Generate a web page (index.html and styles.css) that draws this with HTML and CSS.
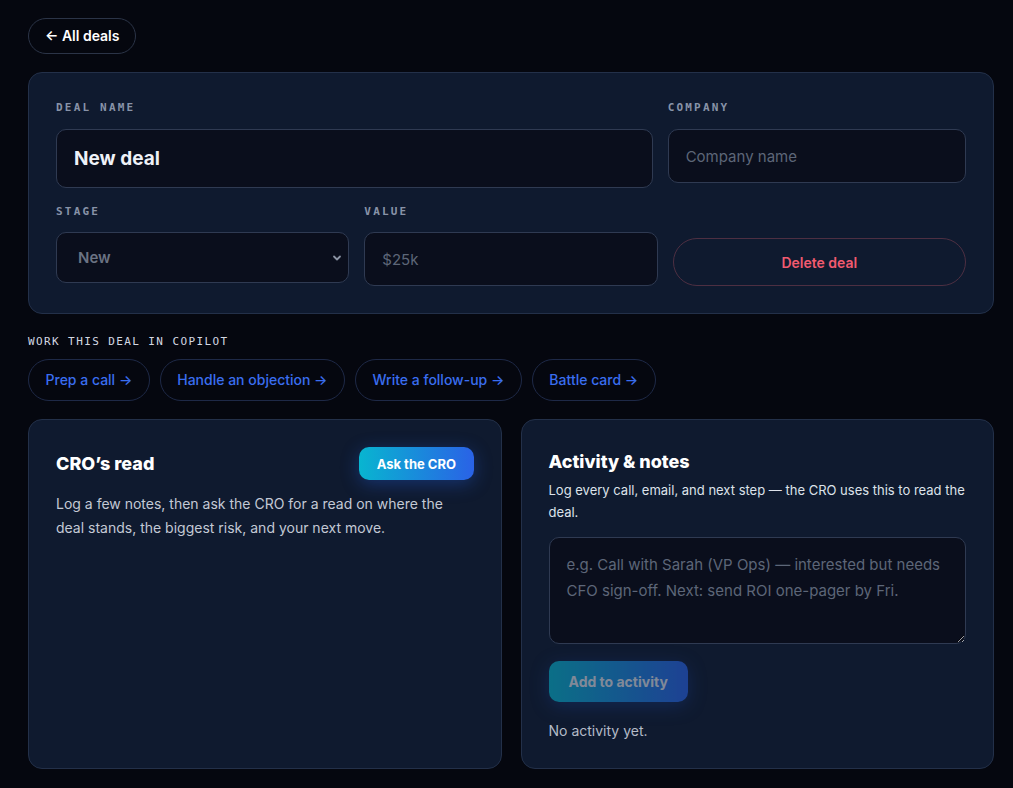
FILE: index.html
```html
<!DOCTYPE html>
<html>
<head>
  <meta charset='utf8'>
  <title>New deal</title>
  <link rel="stylesheet" href="styles.css">
</head>
<body>
  <div class='page'>
    <a class='back' href='#'>&larr; All deals</a>

    <form class='card deal'>
      <div class='row two'>
        <label class='field'>
          <span class='label'>Deal name</span>
          <input class='input big' name='name' value='New deal'>
        </label>
        <label class='field'>
          <span class='label'>Company</span>
          <input class='input' name='company' placeholder='Company name'>
        </label>
      </div>
      <div class='row three'>
        <label class='field'>
          <span class='label'>Stage</span>
          <span class='select-wrap'>
            <select class='input select' name='stage'>
              <option>New</option>
              <option>Qualified</option>
              <option>Proposal</option>
              <option>Won</option>
            </select>
            <svg class='chevron' width='12' height='12' viewBox='0 0 12 12'><path d='M3 4.5 6 7.5 9 4.5' fill='none' stroke='currentColor' stroke-width='1.8' stroke-linecap='round' stroke-linejoin='round'/></svg>
          </span>
        </label>
        <label class='field'>
          <span class='label'>Value</span>
          <input class='input' name='value' placeholder='$25k'>
        </label>
        <div class='field end'>
          <button type='button' class='danger'>Delete deal</button>
        </div>
      </div>
    </form>

    <div class='copilot'>
      <div class='label light'>Work this deal in Copilot</div>
      <div class='chips'>
        <a class='chip' href='#'>Prep a call &rarr;</a>
        <a class='chip' href='#'>Handle an objection &rarr;</a>
        <a class='chip' href='#'>Write a follow-up &rarr;</a>
        <a class='chip' href='#'>Battle card &rarr;</a>
      </div>
    </div>

    <div class='panels'>
      <section class='card panel'>
        <div class='panel-head'>
          <h2>CRO&rsquo;s read</h2>
          <button type='button' class='primary'>Ask the CRO</button>
        </div>
        <p class='copy'>Log a few notes, then ask the CRO for a read on where the deal stands, the biggest risk, and your next move.</p>
      </section>

      <section class='card panel'>
        <h2 class='solo'>Activity &amp; notes</h2>
        <p class='hint'>Log every call, email, and next step &mdash; the CRO uses this to read the deal.</p>
        <textarea class='input notes' placeholder='e.g. Call with Sarah (VP Ops) — interested but needs CFO sign-off. Next: send ROI one-pager by Fri.'></textarea>
        <button type='button' class='primary add' disabled>Add to activity</button>
        <p class='empty'>No activity yet.</p>
      </section>
    </div>
  </div>
</body>
</html>
```

FILE: styles.css
```css
html, body {
  margin: 0;
  padding: 0;
  background: #05070f;
  color: #eef1f7;
  font-family: Inter, "Liberation Sans", sans-serif;
}
.page {
  width: 966px;
  padding: 18px 0 20px 28px;
}
.back {
  display: inline-block;
  box-sizing: border-box;
  height: 36px;
  line-height: 34px;
  padding: 0 16px;
  border: 1px solid #2b3447;
  border-radius: 18px;
  color: #fff;
  font-size: 14px;
  font-weight: 600;
  text-decoration: none;
}
.card {
  box-sizing: border-box;
  background: #0f1a2f;
  border: 1px solid #233049;
  border-radius: 14px;
}
.deal {
  margin-top: 18px;
  padding: 28px 27px 27px;
}
.row {
  display: grid;
  column-gap: 15px;
}
.row.two {
  grid-template-columns: 2fr 1fr;
}
.row.three {
  grid-template-columns: 1fr 1fr 1fr;
  margin-top: 17px;
}
.row.three .label {
  margin-bottom: 13px;
}
.field {
  display: flex;
  flex-direction: column;
}
.field.end {
  justify-content: flex-end;
}
.label {
  font-family: "DejaVu Sans Mono", monospace;
  font-size: 11px;
  font-weight: bold;
  letter-spacing: 2.2px;
  text-transform: uppercase;
  color: #8893a8;
  margin-bottom: 14px;
  line-height: 14px;
}
.label.light {
  color: #d3d8e2;
  font-weight: normal;
  letter-spacing: 1.4px;
  margin-bottom: 10px;
}
.input {
  box-sizing: border-box;
  height: 54px;
  width: 100%;
  padding: 0 17px;
  background: #0a0e1c;
  border: 1px solid #2f3a52;
  border-radius: 10px;
  color: #eef1f7;
  font-family: Inter, "Liberation Sans", sans-serif;
  font-size: 15px;
  outline: none;
}
.input::placeholder {
  color: #5d6678;
}
.input.big {
  height: 59px;
  font-size: 19px;
  font-weight: 700;
}
.select-wrap {
  position: relative;
  display: block;
}
.select {
  height: 51px;
  appearance: none;
  -webkit-appearance: none;
  padding-left: 21px;
  color: #6b7383;
  font-weight: 600;
}
.chevron {
  position: absolute;
  right: 6px;
  top: 20px;
  color: #8b93a3;
}
.danger {
  box-sizing: border-box;
  height: 48px;
  width: 100%;
  background: transparent;
  border: 1px solid #4d2f42;
  border-radius: 24px;
  color: #f25a70;
  font-family: Inter, "Liberation Sans", sans-serif;
  font-size: 14px;
  font-weight: 600;
}
.copilot {
  margin-top: 21px;
}
.chips {
  display: flex;
  gap: 10px;
}
.chip {
  box-sizing: border-box;
  height: 42px;
  line-height: 40px;
  padding: 0 16.5px;
  border: 1px solid #1e2947;
  border-radius: 21px;
  color: #3a6ef0;
  font-size: 14px;
  font-weight: 500;
  text-decoration: none;
}
.panels {
  display: grid;
  grid-template-columns: 1fr 1fr;
  column-gap: 19px;
  margin-top: 18px;
}
.panel {
  min-height: 350px;
  padding: 27px 27px 28px;
}
.panel-head {
  display: flex;
  justify-content: space-between;
  align-items: center;
}
h2 {
  margin: 0;
  font-size: 18px;
  font-weight: 800;
  color: #fff;
}
h2.solo {
  margin-top: 4px;
}
.primary {
  box-sizing: border-box;
  height: 33px;
  padding: 0 17.5px;
  border: 0;
  border-radius: 10px;
  background: linear-gradient(90deg, #08b5d0, #2a62e6);
  box-shadow: 0 4px 18px rgba(37, 99, 235, 0.35);
  color: #fff;
  font-family: Inter, "Liberation Sans", sans-serif;
  font-size: 13px;
  font-weight: 700;
}
.copy {
  margin: 12px 0 0;
  font-size: 14px;
  line-height: 24px;
  color: #c3c9d5;
}
.hint {
  margin: 7px 0 0;
  font-size: 13px;
  line-height: 22px;
  color: #dde2ea;
}
.notes {
  display: block;
  height: 107px;
  margin-top: 14px;
  padding: 14px 17px;
  font-size: 15px;
  line-height: 26px;
  resize: vertical;
}
.add {
  height: 41px;
  margin-top: 17px;
  padding: 0 20px;
  font-size: 14px;
  opacity: 0.55;
  color: #dfe4ee;
}
.empty {
  margin: 20px 0 0;
  font-size: 14px;
  color: #b4bbc8;
}
```
